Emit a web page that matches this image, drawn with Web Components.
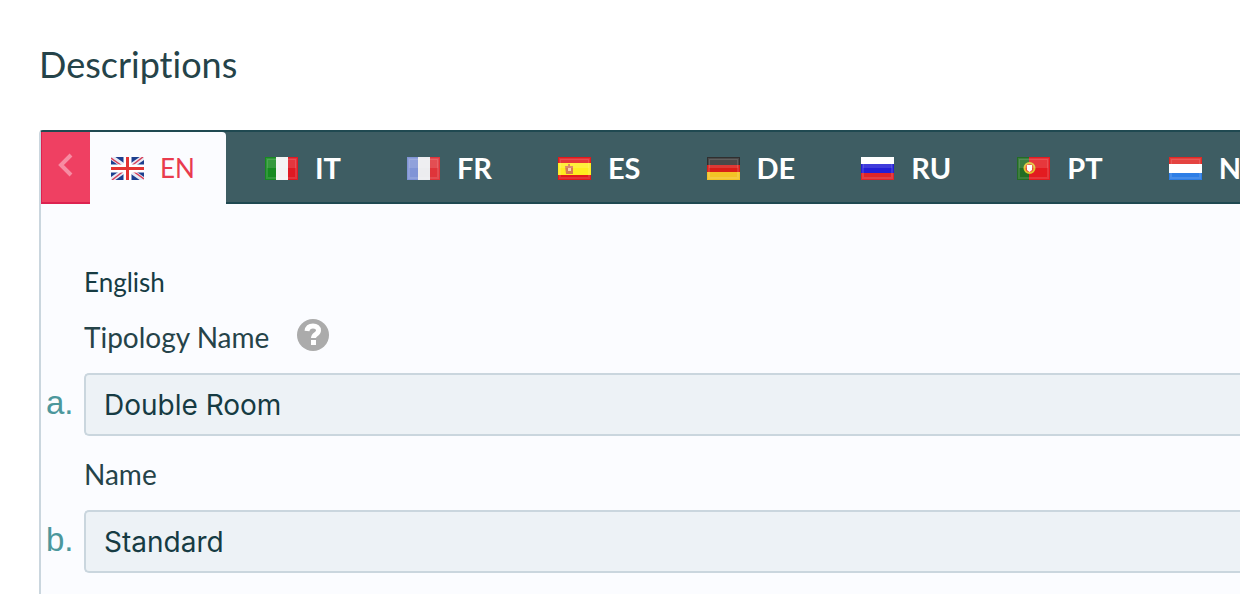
<!DOCTYPE html>
<html lang="en">
<head>
<meta charset="utf-8">
<title>Descriptions</title>
<style>
  body { margin: 0; background: #fff; color: #254349; font-family: Lato, sans-serif; font-variant-ligatures: none; overflow-x: hidden; }
</style>
</head>
<body>
<descriptions-page heading="Descriptions">
  <language-tabs slot="tabs">
    <language-tab code="EN" active></language-tab>
    <language-tab code="IT"></language-tab>
    <language-tab code="FR"></language-tab>
    <language-tab code="ES"></language-tab>
    <language-tab code="DE"></language-tab>
    <language-tab code="RU"></language-tab>
    <language-tab code="PT"></language-tab>
    <language-tab code="NL"></language-tab>
  </language-tabs>
  <text-field marker="a." label="Tipology Name" value="Double Room"><help-button></help-button></text-field>
  <text-field marker="b." label="Name" value="Standard"></text-field>
</descriptions-page>
<script>
const flags = {
  EN: `<path fill="#1d3f8f" d="M0 0h33v23H0z"/><path stroke="#e8eaf4" stroke-width="5" d="M0 0l33 23M33 0L0 23"/><path stroke="#d8405a" stroke-width="1.5" d="M0 1l14 10M33 22L19 12M32 0L19 10M1 23l13-10"/><path stroke="#fff" stroke-width="8" d="M16.5 0v23M0 11.5h33"/><path stroke="#e43432" stroke-width="3" d="M16.5 0v23M0 11.5h33"/>`,
  IT: `<path fill="#168a20" d="M0 0h11v23H0z"/><path fill="#f3f3f3" d="M11 0h12v23H11z"/><path fill="#e01922" d="M23 0h10v23H23z"/>`,
  FR: `<path fill="#8094d6" d="M0 0h11v23H0z"/><path fill="#ececef" d="M11 0h12v23H11z"/><path fill="#df343a" d="M23 0h10v23H23z"/>`,
  ES: `<path fill="#e2191b" d="M0 0h33v23H0z"/><path fill="#ffec20" d="M0 6h33v12H0z"/><path fill="#d87a52" d="M7 9h3V7h2v2h3v8H8z"/><path fill="#f4d2b0" d="M10 11h3v3h-3z"/>`,
  DE: `<path fill="#302f2f" d="M0 0h33v9H0z"/><path fill="#d91c17" d="M0 8h33v8H0z"/><path fill="#f3c126" d="M0 15h33v8H0z"/>`,
  RU: `<path fill="#fff" d="M0 0h33v8H0z"/><path fill="#231ed6" d="M0 7h33v9H0z"/><path fill="#df2528" d="M0 16h33v7H0z"/>`,
  PT: `<path fill="#236d24" d="M0 0h12v23H0z"/><path fill="#e31b20" d="M12 0h21v23H12z"/><circle cx="12.5" cy="11" r="5" fill="#ed4938" stroke="#dfc52f" stroke-width="2"/><path fill="#fff" d="M10 8h5v5l-2.500 2L10 13z"/>`,
  NL: `<path fill="#e12824" d="M0 0h33v8H0z"/><path fill="#fff" d="M0 7h33v9H0z"/><path fill="#2d7ee6" d="M0 16h33v7H0z"/>`
};

class LanguageTab extends HTMLElement {
  connectedCallback() {
    const code = this.getAttribute('code');
    const active = this.hasAttribute('active');
    const gloss = active ? '' : '<path fill="#fff" fill-opacity=".13" d="M2 2h29v9H2z"/><path fill="none" stroke="#fff" stroke-opacity=".12" stroke-width="2" d="M2 2h29v19H2z"/>';
    this.attachShadow({ mode: 'open' }).innerHTML = `
      <style>
        :host { display: flex; flex: none; }
        button { display: flex; align-items: center; gap: 17px; padding: 0 33px; border: 0; background: none; color: #fff; font: bold 29px/36px Lato, sans-serif; cursor: pointer; }
        svg { display: block; width: 33px; height: 23px; flex: none; }
        :host([active]) { margin-right: 6px; }
        :host([active]) button { gap: 16px; padding: 0 31px 0 21px; border-radius: 0 4px 0 0; background: #fbfcff; color: #e93b4e; font-weight: normal; font-size: 26px; }
      </style>
      <button type="button" role="tab" aria-selected="${active}">
        <svg viewBox="0 0 33 23" aria-hidden="true">${flags[code]}${gloss}</svg><span>${code}</span>
      </button>`;
  }
}
customElements.define('language-tab', LanguageTab);

class LanguageTabs extends HTMLElement {
  connectedCallback() {
    this.attachShadow({ mode: 'open' }).innerHTML = `
      <style>
        :host { display: block; overflow: hidden; background: #3e5d63; }
        nav { display: flex; height: 72px; box-shadow: inset 0 -2px #1f4951; }
        .previous { display: grid; place-items: center; flex: none; width: 49px; padding: 0 0 4px; border: 0; border-left: 1px solid #dd2250; border-bottom: 2px solid #dd2250; background: #ef4062; cursor: pointer; }
        .list { display: flex; flex: none; }
      </style>
      <nav aria-label="Languages">
        <button class="previous" type="button" aria-label="Previous languages">
          <svg width="16" height="24" viewBox="0 0 16 24" fill="none" stroke="#f78ca2" stroke-width="4"><path d="M13 2L3 12l10 10"/></svg>
        </button>
        <div class="list" role="tablist"><slot></slot></div>
      </nav>`;
  }
}
customElements.define('language-tabs', LanguageTabs);

class HelpButton extends HTMLElement {
  connectedCallback() {
    this.attachShadow({ mode: 'open' }).innerHTML = `
      <style>
        :host { display: block; }
        button { display: block; padding: 0 0 4px; border: 0; background: none; cursor: pointer; }
        svg { display: block; }
      </style>
      <button type="button" aria-label="Help">
        <svg width="32" height="32" viewBox="0 0 32 32"><circle cx="16" cy="16" r="16" fill="#ababab"/><path d="M10 12c.5-3.500 2.700-5 6-5 3.500 0 5.500 1.700 5.500 4.500 0 4-5 3.500-5 7.500" fill="none" stroke="#fff" stroke-width="5"/><path fill="#fff" d="M14 21h5v5h-5z"/></svg>
      </button>`;
  }
}
customElements.define('help-button', HelpButton);

class TextField extends HTMLElement {
  connectedCallback() {
    const at = name => this.getAttribute(name);
    this.attachShadow({ mode: 'open' }).innerHTML = `
      <style>
        :host { display: grid; grid-template-columns: 42px 1fr; margin-bottom: 9px; }
        .heading { grid-column: 2; display: flex; align-items: center; gap: 28px; padding: 11px 0 18px; }
        label { font-size: 28px; line-height: 36px; }
        .marker { padding: 0 0 4px 4px; align-self: center; color: #4c979c; font: 33px/36px "Liberation Sans", sans-serif; }
        input { box-sizing: border-box; width: 100%; min-width: 0; height: 63px; margin: 0; padding: 0 18px; border: 2px solid #cad6de; border-right: 0; border-radius: 5px 0 0 5px; background: #edf2f6; color: #163b43; font: 28px Inter, sans-serif; outline: 0; }
      </style>
      <div class="heading"><label for="field">${at('label')}</label><slot></slot></div>
      <span class="marker">${at('marker')}</span>
      <input id="field" type="text" value="${at('value')}">`;
  }
}
customElements.define('text-field', TextField);

class DescriptionsPage extends HTMLElement {
  connectedCallback() {
    this.attachShadow({ mode: 'open' }).innerHTML = `
      <style>
        :host { display: block; padding: 40px 0 0 39px; }
        h1 { margin: 0 0 42px; font-size: 36px; line-height: 48px; font-weight: normal; }
        section { border-left: 2px solid #cad6de; border-top: 2px solid #1f4951; border-radius: 4px 0 0 0; background: #fbfcff; min-height: calc(100vh - 132px); }
        .fields { padding: 60px 0 12px 1px; }
        p { margin: 0 0 8px 42px; font-size: 26px; line-height: 36px; color: #163b43; }
      </style>
      <h1>${this.getAttribute('heading')}</h1>
      <section>
        <slot name="tabs"></slot>
        <div class="fields"><p>English</p><slot></slot></div>
      </section>`;
  }
}
customElements.define('descriptions-page', DescriptionsPage);
</script>
</body>
</html>
